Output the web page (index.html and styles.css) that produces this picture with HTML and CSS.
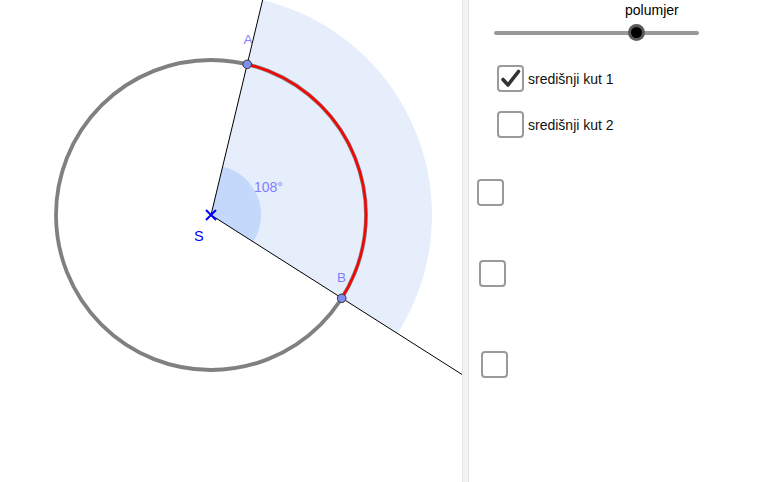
FILE: index.html
```html
<!DOCTYPE html>
<html>
<head>
<meta charset="utf-8">
<link rel="stylesheet" href="styles.css">
</head>
<body>
<div class="app">
  <div class="graphics">
    <svg width="462" height="482" viewBox="0 0 462 482">
      <path d="M211 215 L262.6 0.1 A221 221 0 0 1 397.4 333.7 Z" fill="#e6eefc"/>
      <path d="M211 215 L222.7 166.4 A50 50 0 0 1 253.2 241.9 Z" fill="#c4d8fb"/>
      <circle cx="211" cy="215" r="155" fill="none" stroke="#808080" stroke-width="3.8"/>
      <path d="M247.2 64.3 A155 155 0 0 1 341.7 298.3" fill="none" stroke="#ff0000" stroke-width="2.4"/>
      <line x1="211" y1="215" x2="263.6" y2="-4" stroke="#000" stroke-width="1"/>
      <line x1="211" y1="215" x2="466" y2="377" stroke="#000" stroke-width="1"/>
      <path d="M206 210 L216 220 M216 210 L206 220" stroke="#0000ff" stroke-width="2"/>
      <circle cx="247.2" cy="64.3" r="4.3" fill="#7f8ff0" stroke="#333" stroke-width="1"/>
      <circle cx="341.7" cy="298.3" r="4.3" fill="#7f8ff0" stroke="#333" stroke-width="1"/>
      <text x="243.5" y="44" class="lbl pt">A</text>
      <text x="337" y="282" class="lbl pt">B</text>
      <text x="194" y="241" class="lbl s">S</text>
      <text x="254" y="192" class="lbl ang">108°</text>
    </svg>
  </div>
  <div class="divider"></div>
  <div class="panel">
    <div class="slider">
      <div class="slider-label">polumjer</div>
      <div class="slider-row">
        <div class="track"></div>
        <div class="knob"></div>
      </div>
    </div>
    <div class="cb-row r1">
      <div class="box">
        <svg width="23" height="23" viewBox="0 0 23 23"><path d="M4 12.5 L9 18 L19.5 4.5" fill="none" stroke="#333" stroke-width="3.6" stroke-linecap="round" stroke-linejoin="round"/></svg>
      </div>
      <span class="cb-text">središnji kut 1</span>
    </div>
    <div class="cb-row r2">
      <div class="box"></div>
      <span class="cb-text">središnji kut 2</span>
    </div>
    <div class="cb-row r3"><div class="box"></div></div>
    <div class="cb-row r4"><div class="box"></div></div>
    <div class="cb-row r5"><div class="box"></div></div>
  </div>
</div>
</body>
</html>
```
FILE: styles.css
```css
html, body {
  margin: 0;
  padding: 0;
  background: #fff;
  overflow: hidden;
}
.app {
  display: flex;
  width: 766px;
  height: 482px;
  font-family: "Liberation Sans", Arial, sans-serif;
}
.graphics {
  width: 462px;
  height: 482px;
  flex: none;
}
.graphics svg {
  display: block;
}
.lbl {
  font-family: "Liberation Sans", Arial, sans-serif;
}
.pt {
  font-size: 13.5px;
  fill: #7f7fff;
}
.s {
  font-size: 14.5px;
  fill: #0000ff;
}
.ang {
  font-size: 14px;
  fill: #7f7fff;
}
.divider {
  width: 5px;
  flex: none;
  background: #f3f3f3;
  border-left: 1px solid #e2e2e2;
  border-right: 1px solid #e2e2e2;
}
.panel {
  flex: 1;
  display: flex;
  flex-direction: column;
  align-items: flex-start;
  color: #000;
  font-size: 14px;
}
.slider {
  margin-left: 25px;
  width: 205px;
}
.slider-label {
  margin-top: 2px;
  margin-left: 131px;
  line-height: 16px;
}
.slider-row {
  position: relative;
  margin-top: 6px;
  height: 17px;
  display: flex;
  align-items: center;
}
.track {
  width: 100%;
  height: 4px;
  border-radius: 2px;
  background: #999;
}
.knob {
  position: absolute;
  left: 134px;
  top: 0;
  width: 11px;
  height: 11px;
  border-radius: 50%;
  background: #000;
  border: 3px solid rgba(120,120,120,0.75);
}
.cb-row {
  display: flex;
  align-items: center;
  gap: 4px;
}
.box {
  width: 23px;
  height: 23px;
  border: 2px solid #9a9a9a;
  border-radius: 4px;
  background: #fff;
}
.box svg {
  display: block;
}
.cb-text {
  line-height: 16px;
  color: #111;
}
.r1 { margin-left: 28px; margin-top: 24px; }
.r2 { margin-left: 28px; margin-top: 19px; }
.r3 { margin-left: 8px; margin-top: 41px; }
.r4 { margin-left: 10px; margin-top: 54px; }
.r5 { margin-left: 12px; margin-top: 64px; }
```
